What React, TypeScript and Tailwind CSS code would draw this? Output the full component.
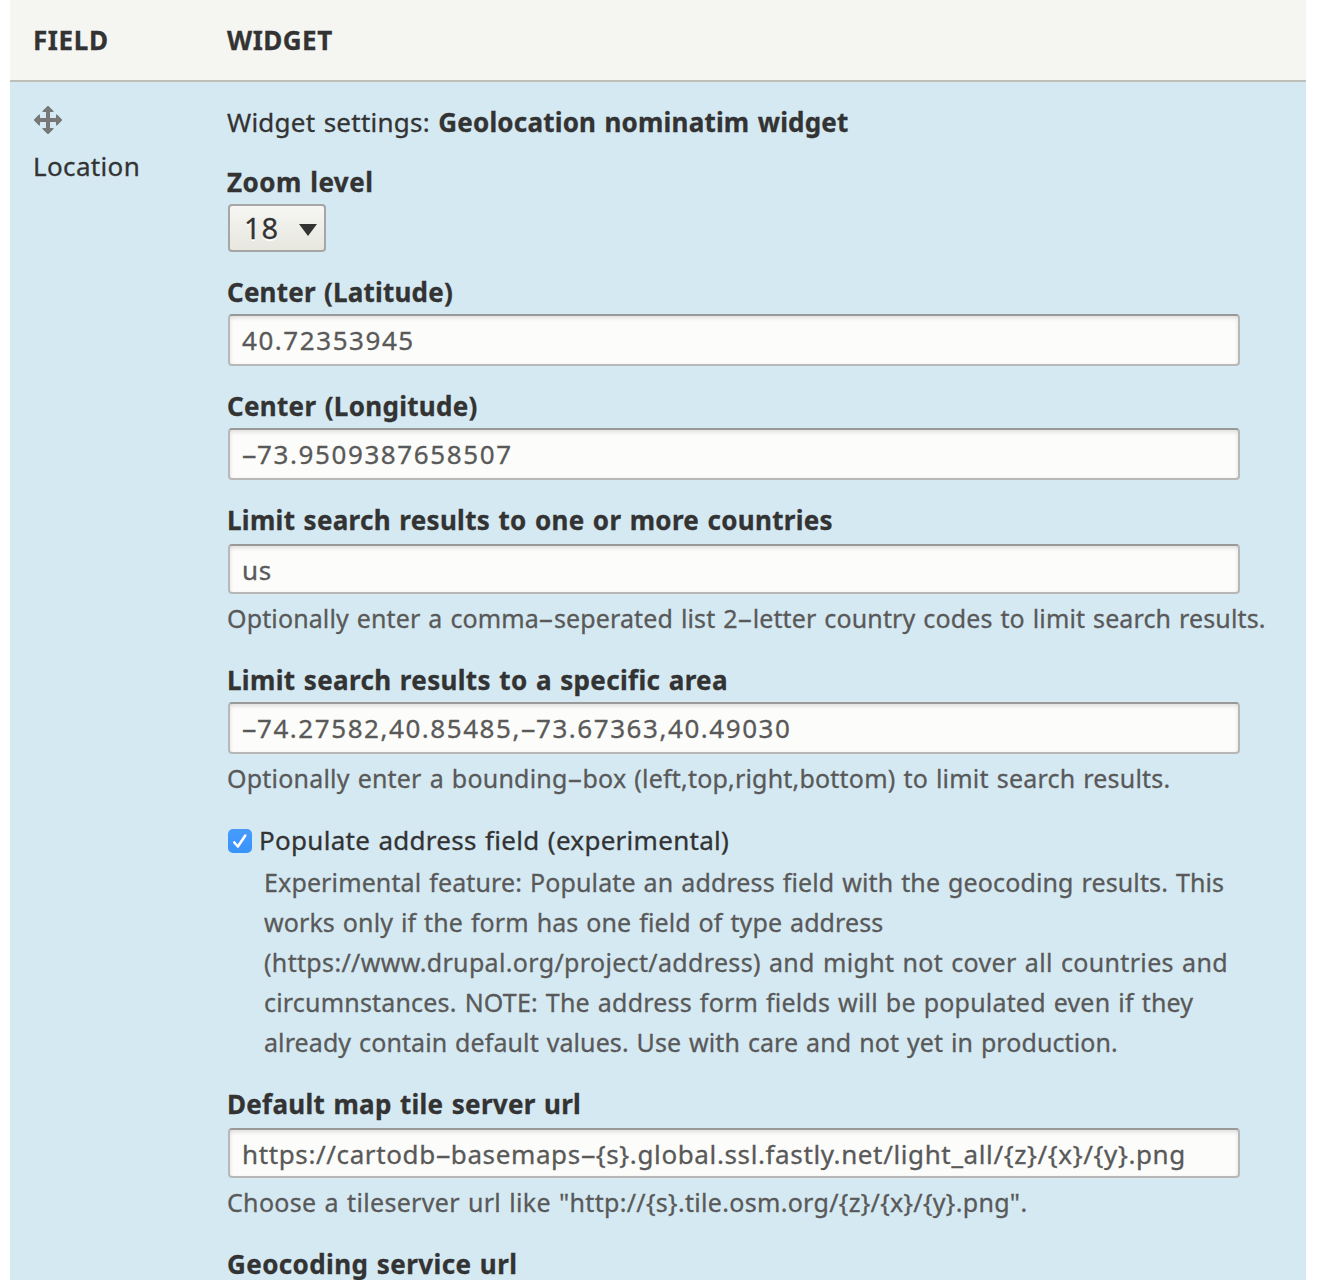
import { Fragment, type ReactNode } from 'react';

/* Wide hyphen, matching the long dash form of the interface typeface. */
function Hyphen() {
  return (
    <span className="inline-block w-[15px] text-center tracking-normal">
      <span className="inline-block scale-x-[1.9]">-</span>
    </span>
  );
}

function Wide({ text }: { text: string }) {
  return (
    <>
      {text.split('-').map((part, i) => (
        <Fragment key={i}>
          {i > 0 && <Hyphen />}
          {part}
        </Fragment>
      ))}
    </>
  );
}

function Label({ children, className }: { children: ReactNode; className: string }) {
  return <div className={`h-10 pl-px text-[26px] leading-10 font-bold ${className}`}>{children}</div>;
}

function Field({ value, className }: { value: string; className: string }) {
  return (
    <div
      className={`ml-0.5 w-[1012px] rounded-[4px] border-2 border-[#b8b8b8] border-t-[#999] bg-[#fcfcfa] pl-3 text-[26px] text-[#595959] shadow-[inset_0_2px_4px_rgba(0,0,0,0.125)] ${className}`}
    >
      <Wide text={value} />
    </div>
  );
}

function Description({ text, className }: { text: string; className: string }) {
  return (
    <div className={`h-10 pl-px text-[25px] leading-10 text-[#595959] ${className}`}>
      <Wide text={text} />
    </div>
  );
}

function MoveIcon() {
  return (
    <svg width="28" height="28" viewBox="0 0 28 28" fill="#787878" className="block">
      <path d="M13.500 0h1L19.500 5v1H16v6h6V8.500h1L28 13.500v1L23 19.500h-1V16h-6v6h3.500v1L14.500 28h-1L8.500 23v-1H12v-6H6v3.500H5L0 14.500v-1L5 8.500h1V12h6V6H8.500V5z" />
    </svg>
  );
}

export default function App() {
  return (
    <div className="h-[1280px] w-[1330px] overflow-hidden bg-white pl-2.5 font-['Noto_Sans','Open_Sans',sans-serif] whitespace-nowrap text-[#333] [-webkit-text-stroke-width:0.3px] [word-spacing:1.3px]">
      <div className="w-[1296px]">
        <div className="flex h-[82px] border-b-2 border-[#bfbfba] bg-[#f5f5f2] pt-5 text-[26px] leading-10 font-bold">
          <div className="w-[217px] pl-[23px] tracking-[0.6px]">FIELD</div>
          <div className="tracking-[0.5px]">WIDGET</div>
        </div>

        <div className="flex h-[1198px] overflow-hidden bg-[#d5e9f2]">
          <div className="w-[216px] shrink-0 pt-6 pl-[23px]">
            <div className="ml-px">
              <MoveIcon />
            </div>
            <div className="mt-3 text-[26px] leading-10 tracking-[0.35px]">Location</div>
          </div>

          <div className="pt-5">
            <div className="h-10 pl-px text-[26px] leading-10 tracking-[0.24px]">
              Widget settings: <span className="font-bold tracking-[0.2px]">Geolocation nominatim widget</span>
            </div>

            <Label className="mt-5 tracking-[0.45px]">Zoom level</Label>
            <div className="mt-0.5 ml-0.5 flex h-12 w-[98px] items-center justify-between rounded-[4px] border-2 border-[#a6a6a6] bg-linear-to-b from-[#f6f6f3] to-[#e7e7df] pr-[7px] pl-3.5">
              <span className="text-[29px] leading-[44px] tracking-[1px] [text-shadow:0_2px_0_#fff]">18</span>
              <svg width="18" height="12" viewBox="0 0 18 12" className="mt-1">
                <path d="M0 0h18L9 12z" fill="#333" />
              </svg>
            </div>

            <Label className="mt-5 tracking-[0.2px]">Center (Latitude)</Label>
            <Field value="40.72353945" className="mt-0.5 h-[52px] leading-[48px] tracking-[1.55px]" />

            <Label className="mt-5 tracking-[0.3px]">Center (Longitude)</Label>
            <Field value="-73.9509387658507" className="mt-0.5 h-[52px] leading-[48px] tracking-[1.6px]" />

            <Label className="mt-5 tracking-[0.3px]">Limit search results to one or more countries</Label>
            <Field value="us" className="mt-1 h-[50px] pt-px leading-[46px] tracking-[0.8px]" />
            <Description
              className="mt-1 tracking-[0.125px]"
              text="Optionally enter a comma-seperated list 2-letter country codes to limit search results."
            />

            <Label className="mt-[22px] tracking-[0.34px]">Limit search results to a specific area</Label>
            <Field value="-74.27582,40.85485,-73.67363,40.49030" className="mt-0.5 h-[52px] leading-[48px] tracking-[1.55px]" />
            <Description
              className="mt-1 tracking-[0.2px]"
              text="Optionally enter a bounding-box (left,top,right,bottom) to limit search results."
            />

            <div className="mt-[22px] ml-0.5 flex h-10 items-center">
              <div className="mt-0.5 flex size-6 items-center justify-center rounded-[5px] bg-linear-to-b from-[#479bfa] to-[#3893fc]">
                <svg width="24" height="24" viewBox="0 0 24 24" fill="none" stroke="#fff" strokeWidth="2.600" strokeLinecap="round" strokeLinejoin="round">
                  <path d="M6.300 13.500l3.600 4L17.300 6.500" />
                </svg>
              </div>
              <div className="pl-[7px] text-[26px] leading-10 tracking-[0.28px]">Populate address field (experimental)</div>
            </div>
            <div className="mt-0.5 pl-[37px]">
              <Description className="tracking-[0.125px]" text="Experimental feature: Populate an address field with the geocoding results. This" />
              <Description className="tracking-[0.104px]" text="works only if the form has one field of type address" />
              <Description className="tracking-[0.34px]" text="(https://www.drupal.org/project/address) and might not cover all countries and" />
              <Description className="tracking-[0.19px]" text="circumnstances. NOTE: The address form fields will be populated even if they" />
              <Description className="tracking-[0.09px]" text="already contain default values. Use with care and not yet in production." />
            </div>

            <Label className="mt-[22px] tracking-[0.28px]">Default map tile server url</Label>
            <Field
              value="https://cartodb-basemaps-{s}.global.ssl.fastly.net/light_all/{z}/{x}/{y}.png"
              className="mt-1 h-[50px] pt-px leading-[46px] tracking-[0.62px]"
            />
            <Description className="mt-1 tracking-[0.32px]" text={'Choose a tileserver url like "http://{s}.tile.osm.org/{z}/{x}/{y}.png".'} />

            <Label className="mt-[22px] tracking-[0.4px]">Geocoding service url</Label>
          </div>
        </div>
      </div>
    </div>
  );
}
